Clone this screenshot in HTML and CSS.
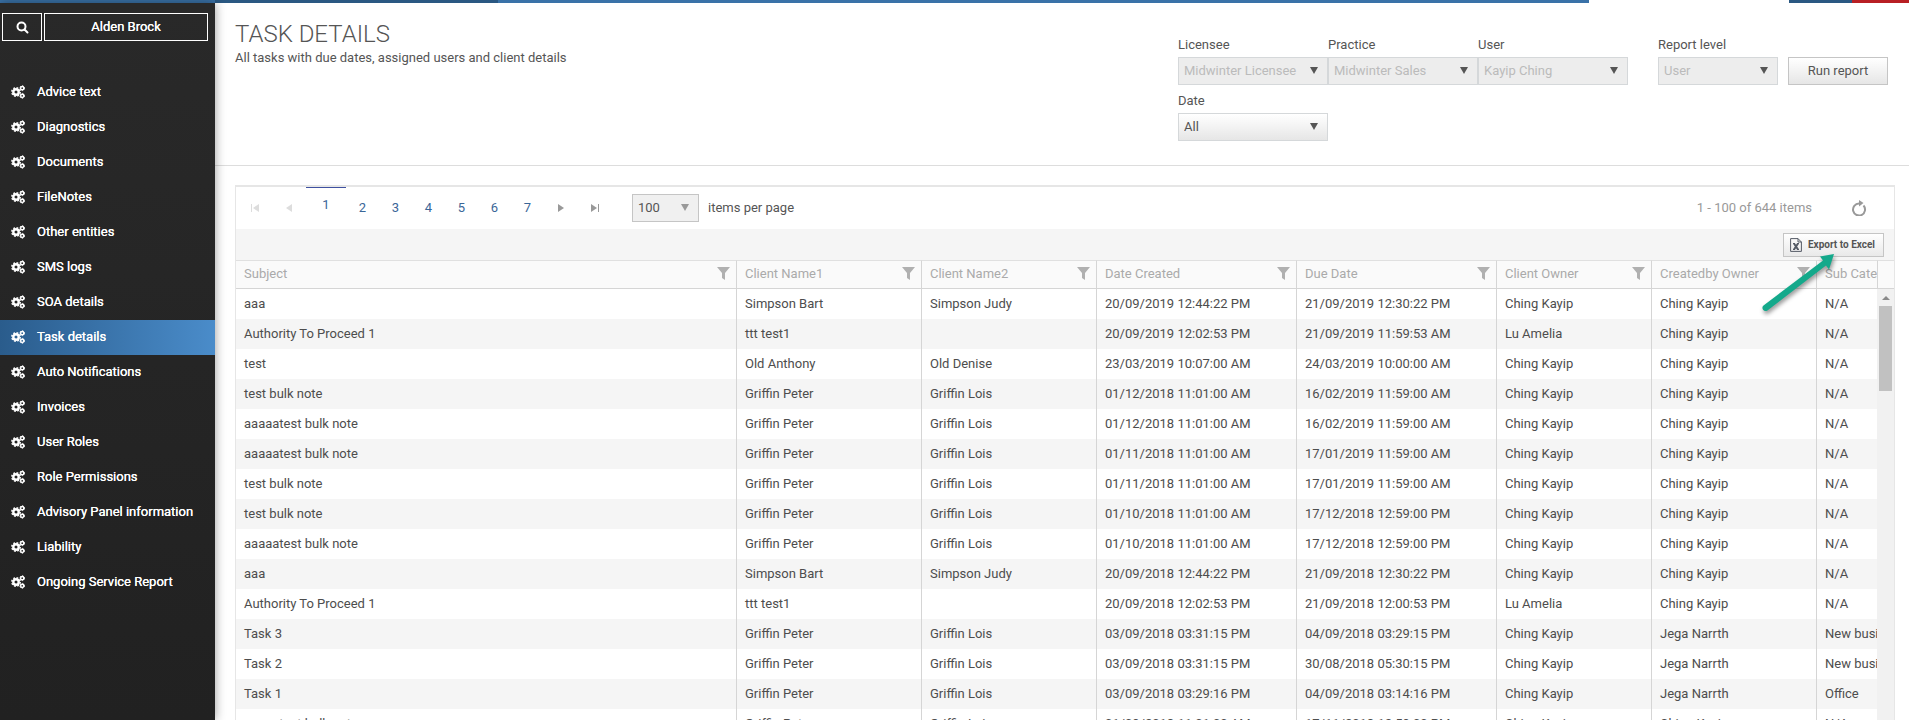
FILE: index.html
```
<!DOCTYPE html>
<html lang="en">
<head>
	<meta charset="utf-8">
	<title>Task details</title>
	<meta name="viewport" content="width=device-width, initial-scale=1.0">
	<link rel="stylesheet" href="styles.css">
</head>

<body>

	<!-- icons used more than once -->
	<svg class="sprite" aria-hidden="true">
		<symbol id="icon-cogs" viewBox="0 0 14 14">
			<circle cx="5" cy="7" r="2.700" stroke-width="2.400"/>
			<circle cx="5" cy="7" r="4.200" stroke-width="1.500" stroke-dasharray="1.800 1.500"/>
			<circle cx="11.200" cy="3.200" r="1.600" stroke-width="1.500"/>
			<circle cx="11.200" cy="3.200" r="2.400" stroke-width="1" stroke-dasharray="1.300 1.200"/>
			<circle cx="11.200" cy="10.800" r="1.600" stroke-width="1.500"/>
			<circle cx="11.200" cy="10.800" r="2.400" stroke-width="1" stroke-dasharray="1.300 1.200"/>
		</symbol>
		<symbol id="icon-filter" viewBox="0 0 13 13">
			<path d="M0 0h13L8 6v7L5 11V6z"/>
		</symbol>
	</svg>

	<div class="topbar">
		<span class="bar-blue bar-side"></span>
		<span class="bar-navy bar-logo"></span>
		<span class="bar-blue bar-fill"></span>
		<span class="bar-gap"></span>
		<span class="bar-navy bar-user"></span>
		<span class="bar-red"></span>
	</div>

	<div class="page">

		<div class="sidebar">
			<div class="who">
				<button class="who-search" type="button" aria-label="Search">
					<svg width="13" height="13" viewBox="0 0 13 13"><circle cx="5.500" cy="5.500" r="4"/><path d="M8.500 8.500l3 3"/></svg>
				</button>
				<button class="who-name" type="button">Alden Brock</button>
			</div>
			<ul class="menu" id="menu"></ul>
		</div>

		<div class="main">

			<div class="header">
				<div class="title">
					<h1>TASK DETAILS</h1>
					<p>All tasks with due dates, assigned users and client details</p>
				</div>

				<form class="filters">
					<div class="filter-group">
						<div class="field">
							<label for="licensee">Licensee</label>
							<span class="drop"><select id="licensee" disabled><option>Midwinter Licensee</option></select></span>
						</div>
						<div class="field">
							<label for="practice">Practice</label>
							<span class="drop"><select id="practice" disabled><option>Midwinter Sales</option></select></span>
						</div>
						<div class="field">
							<label for="user">User</label>
							<span class="drop"><select id="user" disabled><option>Kayip Ching</option></select></span>
						</div>
						<div class="field">
							<label for="date">Date</label>
							<span class="drop"><select id="date"><option>All</option></select></span>
						</div>
					</div>
					<div class="field field-level">
						<label for="level">Report level</label>
						<span class="drop"><select id="level" disabled><option>User</option></select></span>
					</div>
					<button class="run" type="button">Run report</button>
				</form>
			</div>

			<div class="grid">

				<div class="pager">
					<button class="nav off" type="button" aria-label="First page"><svg width="8" height="8" viewBox="0 0 8 8"><path d="M0 0h1v8H0zM8 0v8L2 4z"/></svg></button>
					<button class="nav off" type="button" aria-label="Previous page"><svg width="8" height="8" viewBox="0 0 8 8"><path d="M7 0v8L1 4z"/></svg></button>
					<a class="num current" href="#">1</a>
					<a class="num" href="#">2</a>
					<a class="num" href="#">3</a>
					<a class="num" href="#">4</a>
					<a class="num" href="#">5</a>
					<a class="num" href="#">6</a>
					<a class="num" href="#">7</a>
					<button class="nav" type="button" aria-label="Next page"><svg width="8" height="8" viewBox="0 0 8 8"><path d="M1 0v8l6-4z"/></svg></button>
					<button class="nav" type="button" aria-label="Last page"><svg width="8" height="8" viewBox="0 0 8 8"><path d="M7 0h1v8H7zM0 0v8l6-4z"/></svg></button>
					<span class="drop drop-size"><select id="size"><option>100</option></select></span>
					<label class="size-label" for="size">items per page</label>
					<span class="count">1 - 100 of 644 items</span>
					<button class="refresh" type="button" aria-label="Refresh">
						<svg width="16" height="16" viewBox="0 0 16 16"><path class="ring" d="M12.500 5.500A6 6 0 1 1 8 3.500"/><path d="M8 0l4.500 3L8 6.500z"/></svg>
					</button>
				</div>

				<div class="toolbar">
					<button class="export" type="button">
						<svg width="12" height="14" viewBox="0 0 12 14"><path d="M.6.6h7.400l3.400 3.400v9.400H.6zM8 .6V4h3.400"/><path class="x" d="M4 5.500l4 6M8 5.500l-4 6"/><path d="M3 11.500h2M7 11.500h2M3 5.500h2M7 5.500h2"/></svg>
						Export to Excel
					</button>
					<!-- pointer to the export button -->
					<svg class="arrow" width="76" height="62" viewBox="0 0 76 62"><path d="M72 0L58 2.500l3 4L1.500 51.500a3.200 3.200 0 0 0 3.600 5.200L64 11.500l3 4z"/></svg>
				</div>

				<div class="table-area">
					<div class="table-clip">
						<table>
							<colgroup>
								<col><col class="w-name1"><col class="w-name2"><col class="w-date"><col class="w-date"><col class="w-owner"><col class="w-created"><col class="w-sub">
							</colgroup>
							<thead><tr id="head"></tr></thead>
							<tbody id="rows"></tbody>
						</table>
					</div>
					<div class="scroll">
						<div class="scroll-head"></div>
						<div class="scroll-track">
							<svg width="8" height="4" viewBox="0 0 8 4"><path d="M0 4l4-4 4 4z"/></svg>
							<div class="scroll-thumb"></div>
						</div>
					</div>
				</div>

			</div>
		</div>
	</div>

	<script src="script.js"></script>
</body>
</html>
```
FILE: styles.css
```
* {
	box-sizing: border-box;
}

body {
	margin: 0;
	height: 100vh;
	overflow: hidden;
	display: flex;
	flex-direction: column;
	font: 13px/20px Roboto, "Liberation Sans", sans-serif;
	color: #555;
	background: #fff;
}

button, select {
	font: inherit;
	color: inherit;
	cursor: pointer;
}

a {
	text-decoration: none;
}

.sprite {
	display: none;
}

/* coloured strip along the top */
.topbar {
	display: flex;
	flex: none;
	height: 3px;
}

.bar-blue { background: #3a72a8; }
.bar-navy { background: #2a5882; }
.bar-red { background: #b81f24; width: 57px; }
.bar-side { width: 215px; }
.bar-logo { width: 283px; }
.bar-fill { flex: 1; }
.bar-gap { width: 200px; }
.bar-user { width: 63px; }

.page {
	flex: 1;
	min-height: 0;
	display: flex;
}

/* left menu */
.sidebar {
	flex: none;
	width: 215px;
	background: linear-gradient(#292929, #212121);
	color: #fff;
	box-shadow: 0 0 10px rgba(0, 0, 0, .4);
	z-index: 1;
}

.who {
	display: flex;
	gap: 2px;
	padding: 10px 7px 0 2px;
	margin-bottom: 34px;
}

.who button {
	height: 28px;
	padding: 0;
	background: none;
	border: 1px solid #fff;
	text-shadow: 0 0 0 #fff;
}

.who-search {
	width: 40px;
	display: flex;
	align-items: center;
	justify-content: center;
}

.who-search svg {
	fill: none;
	stroke: #fff;
	stroke-width: 2;
	stroke-linecap: round;
}

.who-name {
	flex: 1;
}

.menu {
	list-style: none;
	margin: 0;
	padding: 0;
}

.menu a {
	display: flex;
	align-items: center;
	gap: 12px;
	height: 35px;
	padding: 0 0 2px 11px;
	color: #fff;
	text-shadow: 0 0 0 #fff;
}

.menu svg {
	width: 14px;
	height: 14px;
	fill: none;
	stroke: #fff;
}

.menu .active {
	background: linear-gradient(90deg, #2a5c8c, #4a8cca);
}

/* title and report filters */
.main {
	flex: 1;
	min-width: 0;
	display: flex;
	flex-direction: column;
}

.header {
	flex: none;
	display: flex;
	justify-content: space-between;
	height: 163px;
	padding: 18px 21px 0 20px;
	border-bottom: 1px solid #ddd;
}

h1 {
	margin: 0;
	font-size: 24px;
	line-height: 27px;
	font-weight: 300;
}

.title p {
	margin: 0;
}

.filters {
	display: flex;
	align-items: flex-start;
	padding-top: 14px;
}

.filter-group {
	display: grid;
	grid-template-columns: repeat(3, 150px);
	row-gap: 6px;
	margin-right: 30px;
}

.field label {
	display: block;
	margin-bottom: 2px;
}

.field-level {
	width: 120px;
	margin-right: 10px;
}

.drop {
	display: block;
	position: relative;
}

.drop::after {
	content: "";
	position: absolute;
	right: 10px;
	top: 10px;
	border: 4px solid transparent;
	border-top: 7px solid #555;
	border-bottom: 0;
	pointer-events: none;
}

.drop select {
	appearance: none;
	display: block;
	width: 100%;
	height: 28px;
	padding: 0 5px;
	border: 1px solid #d5d8da;
	border-radius: 0;
	background: linear-gradient(#fff, #e6e6e6);
}

.drop select:disabled {
	background: #ededed;
	color: #bbb;
	opacity: 1;
}

.run {
	width: 100px;
	height: 28px;
	margin-top: 22px;
	border: 1px solid #c5c5c5;
	background: linear-gradient(#fff, #e6e6e6);
}

/* grid */
.grid {
	flex: 1;
	min-height: 0;
	display: flex;
	flex-direction: column;
	margin: 19px 14px 0 20px;
	border: 1px solid #e6e6e6;
	border-top-width: 2px;
	border-bottom: 0;
}

.pager {
	flex: none;
	display: flex;
	align-items: center;
	height: 42px;
	padding: 0 19px 0 2px;
}

.nav, .refresh {
	display: flex;
	align-items: center;
	justify-content: center;
	width: 34px;
	height: 28px;
	padding: 0;
	border: 0;
	background: none;
	fill: #999;
}

.nav.off {
	fill: #ddd;
}

.num {
	width: 33px;
	text-align: center;
	color: #3a6698;
}

.current {
	align-self: stretch;
	width: 40px;
	border-top: 1px solid #3f51a0;
	line-height: 34px;
}

.drop-size {
	width: 67px;
	margin: 0 9px 0 20px;
}

.drop-size select {
	border-color: #c5c5c5;
	background: #f0f0f0;
}

.drop-size::after {
	border-top-color: #999;
}

.count {
	margin-left: auto;
	margin-right: 31px;
	color: #999;
}

.refresh {
	width: 32px;
}

.refresh .ring {
	fill: none;
	stroke: #999;
	stroke-width: 2;
}

.toolbar {
	flex: none;
	position: relative;
	display: flex;
	justify-content: flex-end;
	height: 31px;
	padding: 4px 10px 0 0;
	background: #f5f5f5;
}

.export {
	display: flex;
	align-items: center;
	gap: 6px;
	height: 24px;
	padding: 0 8px 0 6px;
	border: 1px solid #c5c5c5;
	background: linear-gradient(#fff, #e9e9e9);
	font-size: 10px;
	font-weight: 700;
}

.export svg {
	fill: none;
	stroke: #555b66;
}

.export .x {
	stroke-width: 2;
}

.arrow {
	position: absolute;
	right: 56px;
	top: 25px;
	z-index: 2;
	overflow: visible;
	fill: #14a98b;
	filter: drop-shadow(1px 3px 2px rgba(0, 0, 0, .4));
}

.table-area {
	flex: 1;
	min-height: 0;
	display: flex;
}

.table-clip {
	flex: 1;
	min-width: 0;
	overflow: hidden;
}

table {
	width: calc(100% + 59px);
	table-layout: fixed;
	border-collapse: separate;
	border-spacing: 0;
}

.w-name1 { width: 185px; }
.w-name2 { width: 175px; }
.w-date { width: 200px; }
.w-owner { width: 155px; }
.w-created { width: 165px; }
.w-sub { width: 120px; }

th, td {
	padding: 0 8px;
	text-align: left;
	white-space: nowrap;
	border-left: 1px solid #d5d5d5;
}

th:first-child, td:first-child {
	border-left: 0;
}

th {
	height: 29px;
	padding-bottom: 2px;
	background: #fafafa;
	border-top: 1px solid #e0e0e0;
	border-bottom: 1px solid #d5d5d5;
	color: #aaa;
	font-weight: 400;
}

th span {
	display: flex;
	align-items: center;
	justify-content: space-between;
}

th svg {
	flex: none;
	width: 13px;
	height: 13px;
	margin-right: -2px;
	fill: #b0b0b0;
}

td {
	height: 30px;
	color: #4d4d4d;
}

tbody tr:nth-child(even) {
	background: #f5f5f5;
}

/* scrollbar at the right of the rows */
.scroll {
	flex: none;
	width: 17px;
	display: flex;
	flex-direction: column;
}

.scroll-head {
	height: 29px;
	background: #fafafa;
	border: 1px solid #d5d5d5;
	border-top-color: #e0e0e0;
	border-right: 0;
}

.scroll-track {
	flex: 1;
	padding: 7px 2px 0;
	background: #f1f1f1;
	text-align: center;
	line-height: 0;
}

.scroll-track svg {
	fill: #8a8a8a;
}

.scroll-thumb {
	height: 85px;
	margin-top: 6px;
	background: #c1c1c1;
}
```
FILE: script.js
```
var menu = ["Advice text", "Diagnostics", "Documents", "FileNotes", "Other entities", "SMS logs", "SOA details", "Task details",
	"Auto Notifications", "Invoices", "User Roles", "Role Permissions", "Advisory Panel information", "Liability", "Ongoing Service Report"];

var columns = ["Subject", "Client Name1", "Client Name2", "Date Created", "Due Date", "Client Owner", "Createdby Owner", "Sub Category"];

var rows = [
	["aaa", "Simpson Bart", "Simpson Judy", "20/09/2019 12:44:22 PM", "21/09/2019 12:30:22 PM", "Ching Kayip", "Ching Kayip", "N/A"],
	["Authority To Proceed 1", "ttt test1", "", "20/09/2019 12:02:53 PM", "21/09/2019 11:59:53 AM", "Lu Amelia", "Ching Kayip", "N/A"],
	["test", "Old Anthony", "Old Denise", "23/03/2019 10:07:00 AM", "24/03/2019 10:00:00 AM", "Ching Kayip", "Ching Kayip", "N/A"],
	["test bulk note", "Griffin Peter", "Griffin Lois", "01/12/2018 11:01:00 AM", "16/02/2019 11:59:00 AM", "Ching Kayip", "Ching Kayip", "N/A"],
	["aaaaatest bulk note", "Griffin Peter", "Griffin Lois", "01/12/2018 11:01:00 AM", "16/02/2019 11:59:00 AM", "Ching Kayip", "Ching Kayip", "N/A"],
	["aaaaatest bulk note", "Griffin Peter", "Griffin Lois", "01/11/2018 11:01:00 AM", "17/01/2019 11:59:00 AM", "Ching Kayip", "Ching Kayip", "N/A"],
	["test bulk note", "Griffin Peter", "Griffin Lois", "01/11/2018 11:01:00 AM", "17/01/2019 11:59:00 AM", "Ching Kayip", "Ching Kayip", "N/A"],
	["test bulk note", "Griffin Peter", "Griffin Lois", "01/10/2018 11:01:00 AM", "17/12/2018 12:59:00 PM", "Ching Kayip", "Ching Kayip", "N/A"],
	["aaaaatest bulk note", "Griffin Peter", "Griffin Lois", "01/10/2018 11:01:00 AM", "17/12/2018 12:59:00 PM", "Ching Kayip", "Ching Kayip", "N/A"],
	["aaa", "Simpson Bart", "Simpson Judy", "20/09/2018 12:44:22 PM", "21/09/2018 12:30:22 PM", "Ching Kayip", "Ching Kayip", "N/A"],
	["Authority To Proceed 1", "ttt test1", "", "20/09/2018 12:02:53 PM", "21/09/2018 12:00:53 PM", "Lu Amelia", "Ching Kayip", "N/A"],
	["Task 3", "Griffin Peter", "Griffin Lois", "03/09/2018 03:31:15 PM", "04/09/2018 03:29:15 PM", "Ching Kayip", "Jega Narrth", "New business"],
	["Task 2", "Griffin Peter", "Griffin Lois", "03/09/2018 03:31:15 PM", "30/08/2018 05:30:15 PM", "Ching Kayip", "Jega Narrth", "New business"],
	["Task 1", "Griffin Peter", "Griffin Lois", "03/09/2018 03:29:16 PM", "04/09/2018 03:14:16 PM", "Ching Kayip", "Jega Narrth", "Office"],
	["aaaaatest bulk note", "Griffin Peter", "Griffin Lois", "01/09/2018 11:01:00 AM", "17/11/2018 12:59:00 PM", "Ching Kayip", "Ching Kayip", "N/A"]
];

document.getElementById("menu").innerHTML = menu.map(function (name) {
	var active = name == "Task details" ? ' class="active"' : "";
	return '<li><a href="#"' + active + '><svg><use href="#icon-cogs"/></svg>' + name + "</a></li>";
}).join("");

document.getElementById("head").innerHTML = columns.map(function (name) {
	return "<th><span>" + name + '<svg><use href="#icon-filter"/></svg></span></th>';
}).join("");

document.getElementById("rows").innerHTML = rows.map(function (row) {
	return "<tr><td>" + row.join("</td><td>") + "</td></tr>";
}).join("");
```
